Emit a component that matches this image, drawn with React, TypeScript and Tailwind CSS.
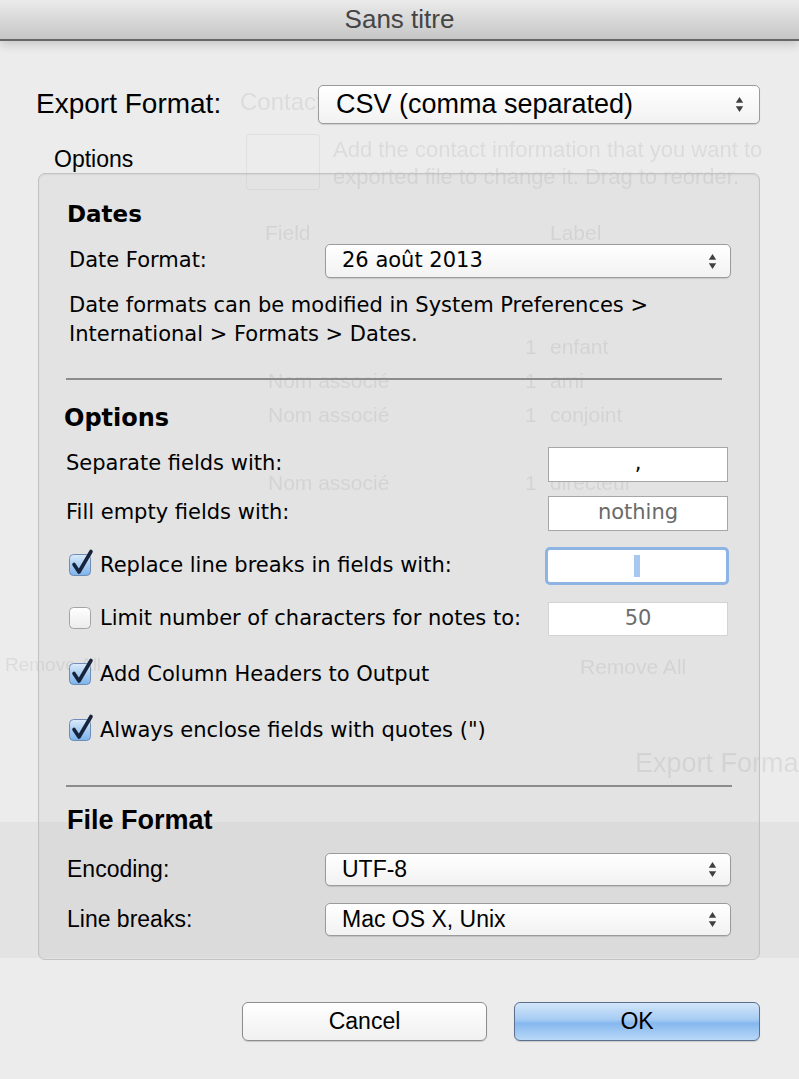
import React from 'react'

const lib = "font-['Liberation_Sans',Arial,sans-serif]"

function Arrows() {
  return (
    <svg width="9" height="17" viewBox="0 0 9 17">
      <path d="M4.5 1 L8.2 6.8 H0.8 Z" fill="#404040" />
      <path d="M4.5 16 L8.2 10.2 H0.8 Z" fill="#404040" />
    </svg>
  )
}

function Select({ value, className, textClass }: { value: string; className: string; textClass: string }) {
  return (
    <div
      className={`flex items-center justify-between rounded-[5px] border border-[#9b9b9b] bg-gradient-to-b from-white to-[#f2f2f2] pl-[16px] pr-[13px] shadow-[0_1px_1px_rgba(0,0,0,0.12)] ${className}`}
    >
      <span className={`text-black ${textClass}`}>{value}</span>
      <Arrows />
    </div>
  )
}

function Checkbox({ checked }: { checked: boolean }) {
  return (
    <svg width="26" height="28" viewBox="0 0 26 28" className="shrink-0">
      <defs>
        <linearGradient id="cbBlue" x1="0" y1="0" x2="0" y2="1">
          <stop offset="0" stopColor="#dcebfb" />
          <stop offset="0.5" stopColor="#a9cdf3" />
          <stop offset="1" stopColor="#7db3ec" />
        </linearGradient>
        <linearGradient id="cbWhite" x1="0" y1="0" x2="0" y2="1">
          <stop offset="0" stopColor="#ffffff" />
          <stop offset="1" stopColor="#ececec" />
        </linearGradient>
      </defs>
      <rect
        x="1.5"
        y="5.5"
        width="21"
        height="21"
        rx="4"
        fill={checked ? 'url(#cbBlue)' : 'url(#cbWhite)'}
        stroke={checked ? '#6f8db2' : '#a3a3a3'}
      />
      {checked && (
        <path
          d="M6 15.5 L11 23 L23 2.5"
          fill="none"
          stroke="#17243b"
          strokeWidth="3.6"
          strokeLinecap="round"
          strokeLinejoin="round"
        />
      )}
    </svg>
  )
}

// faint traces of the window behind the sheet
function Ghost() {
  const rows: [number, string, string][] = [
    [344, '', 'enfant'],
    [378, 'Nom associé', 'ami'],
    [412, 'Nom associé', 'conjoint'],
    [480, 'Nom associé', 'directeur'],
  ]
  return (
    <div className={`absolute inset-0 whitespace-nowrap text-black/[0.07] blur-[0.6px] ${lib}`}>
      <div className="absolute left-[240px] top-[84px] text-[24px]">Contact</div>
      <div className="absolute left-[246px] top-[134px] h-[56px] w-[74px] rounded-[3px] border border-black/[0.05]" />
      <div className="absolute left-[333px] top-[136px] text-[22px] leading-[27px]">
        Add the contact information that you want to
        <br />
        exported file to change it. Drag to reorder.
      </div>
      <div className="absolute left-[265px] top-[217px] text-[21px]">Field</div>
      <div className="absolute left-[550px] top-[217px] text-[21px]">Label</div>
      {rows.map(([y, f, l]) => (
        <div key={y} className="absolute left-[268px] flex text-[21px]" style={{ top: y - 13 }}>
          <span className="w-[257px]">{f}</span>
          <span className="w-[25px]">1</span>
          <span>{l}</span>
        </div>
      ))}
      <div className="absolute left-[5px] top-[651px] text-[19px]">Remove All</div>
      <div className="absolute left-[580px] top-[651px] text-[21px]">Remove All</div>
      <div className="absolute left-[635px] top-[743px] text-[27px]">Export Format</div>
      <div className="absolute left-0 right-0 top-[822px] h-[136px] bg-black/[0.035]" />
    </div>
  )
}

export default function App() {
  return (
    <div className="relative h-[1079px] w-[799px] overflow-hidden bg-[#ececec] font-['DejaVu_Sans',sans-serif] text-black">
      <Ghost />

      <div className="relative">
        <div
          className={`flex h-[41px] items-center justify-center border-b-2 border-[#666] bg-gradient-to-b from-[#ebebeb] to-[#c6c6c6] shadow-[0_3px_10px_rgba(0,0,0,0.18)] ${lib}`}
        >
          <span className="text-[26px] text-[#454545]">Sans titre</span>
        </div>

        <div className="mt-[42px] flex items-center pl-[36px]">
          <span className={`w-[282px] text-[28px] ${lib}`}>Export Format:</span>
          <Select value="CSV (comma separated)" className="h-[39px] w-[442px] pl-[17px] pr-[15px]" textClass={`text-[27px] ${lib}`} />
        </div>

        <div className={`mt-[20px] h-[28px] pl-[54px] text-[23px] leading-[28px] ${lib}`}>Options</div>

        <div className="ml-[38px] flex h-[787px] w-[722px] flex-col rounded-[7px] border border-[#c2c2c2] bg-black/[0.035] shadow-[inset_0_1px_2px_rgba(0,0,0,0.06)]">
          <div className="mt-[26px] pl-[28px] text-[23px] font-bold leading-[28px]">Dates</div>

          <div className="mt-[16px] flex h-[34px] items-center">
            <span className="w-[286px] pl-[30px] text-[21px]">Date Format:</span>
            <Select value="26 août 2013" className="h-[34px] w-[406px]" textClass="text-[21px]" />
          </div>

          <p className="mt-[13px] pl-[30px] text-[21px] leading-[29px]">
            Date formats can be modified in System Preferences &gt;
            <br />
            International &gt; Formats &gt; Dates.
          </p>

          <div className="ml-[27px] mt-[29px] h-[2px] w-[656px] bg-[#8c8c8c]" />

          <div className="mt-[24px] pl-[25px] text-[24px] font-bold leading-[28px]">Options</div>

          <div className="mt-[8px] flex h-[48px] items-center justify-between pl-[27px] pr-[31px]">
            <span className="text-[21px]">Separate fields with:</span>
            <div className="flex h-[35px] w-[180px] items-end justify-center border border-[#a7a7a7] bg-white pb-[1px] text-[21px]">,</div>
          </div>

          <div className="flex h-[50px] items-center justify-between pl-[27px] pr-[31px]">
            <span className="text-[21px]">Fill empty fields with:</span>
            <div className="flex h-[35px] w-[180px] items-center justify-center border border-[#a7a7a7] bg-white text-[21px] text-[#6a6a6a]">nothing</div>
          </div>

          <div className="flex h-[56px] items-center justify-between pl-[29px] pr-[33px]">
            <div className="flex items-center gap-[6px]">
              <div className="-mt-[6px]"><Checkbox checked /></div>
              <span className="text-[21px]">Replace line breaks in fields with:</span>
            </div>
            <div className="flex h-[32px] w-[178px] items-center justify-center rounded-[2px] bg-white ring-[3px] ring-[#8eb4e3]">
              <div className="h-[22px] w-[6px] bg-[#a9c8ef]" />
            </div>
          </div>

          <div className="flex h-[50px] items-center justify-between pl-[29px] pr-[31px]">
            <div className="flex items-center gap-[6px]">
              <div className="-mt-[6px]"><Checkbox checked={false} /></div>
              <span className="text-[21px]">Limit number of characters for notes to:</span>
            </div>
            <div className="flex h-[34px] w-[180px] items-center justify-center border border-[#d3d3d3] bg-white text-[21px] text-[#6d6d6d]">50</div>
          </div>

          <div className="flex h-[62px] items-center pl-[29px]">
            <div className="flex items-center gap-[6px]">
              <div className="-mt-[6px]"><Checkbox checked /></div>
              <span className="text-[21px]">Add Column Headers to Output</span>
            </div>
          </div>

          <div className="flex h-[50px] items-center pl-[29px]">
            <div className="flex items-center gap-[6px]">
              <div className="-mt-[6px]"><Checkbox checked /></div>
              <span className="text-[21px]">Always enclose fields with quotes (")</span>
            </div>
          </div>

          <div className="ml-[27px] mt-[29px] h-[2px] w-[666px] bg-[#8c8c8c]" />

          <div className={`mt-[17px] pl-[28px] text-[27px] font-bold leading-[32px] ${lib}`}>File Format</div>

          <div className="mt-[17px] flex h-[33px] items-center">
            <span className={`w-[286px] pl-[28px] text-[23px] ${lib}`}>Encoding:</span>
            <Select value="UTF-8" className="h-[33px] w-[406px]" textClass={`text-[23px] ${lib}`} />
          </div>

          <div className="mt-[17px] flex h-[33px] items-center">
            <span className={`w-[286px] pl-[28px] text-[23px] ${lib}`}>Line breaks:</span>
            <Select value="Mac OS X, Unix" className="h-[33px] w-[406px]" textClass={`text-[23px] ${lib}`} />
          </div>
        </div>

        <div className={`mt-[42px] flex gap-[27px] pl-[242px] ${lib}`}>
          <button className="flex h-[39px] w-[245px] items-center justify-center rounded-[6px] border border-[#8d8d8d] bg-gradient-to-b from-white to-[#f0f0f0] text-[23px] shadow-[0_1px_1px_rgba(0,0,0,0.15)]">
            Cancel
          </button>
          <button className="flex h-[39px] w-[246px] items-center justify-center rounded-[6px] border border-[#5b6f8e] bg-[linear-gradient(to_bottom,#d3e6fa_0%,#a6cbf3_45%,#86b8ef_55%,#b9d8f7_100%)] text-[23px] shadow-[0_1px_1px_rgba(0,0,0,0.15)]">
            OK
          </button>
        </div>
      </div>
    </div>
  )
}
